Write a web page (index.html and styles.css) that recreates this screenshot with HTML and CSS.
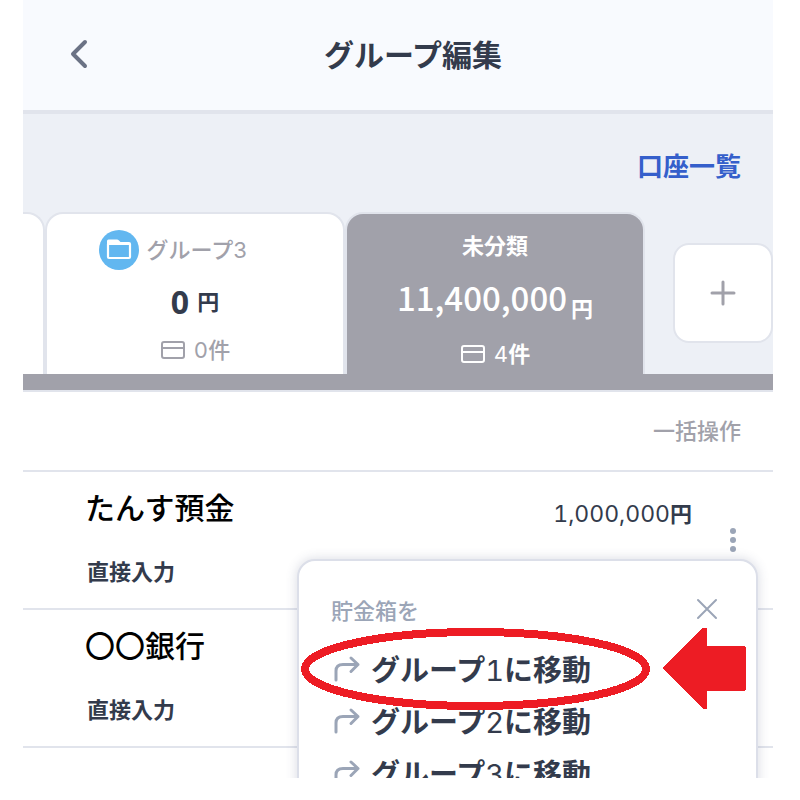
FILE: index.html
```html
<!DOCTYPE html>
<html lang="ja">
<head>
  <meta charset="UTF-8" />
  <title>グループ編集</title>
  <meta name="viewport" content="width=device-width, initial-scale=1" />
  <link rel="stylesheet" href="styles.css">
</head>
<body>

<div class="app">
  <!-- ヘッダー -->
  <header class="header">
    <button type="button" class="back" aria-label="戻る">
      <svg width="20" height="30" viewBox="0 0 20 30"><path d="M16 3 L4 15 L16 27" /></svg>
    </button>
    <h1>グループ編集</h1>
  </header>

  <!-- グループタブ -->
  <section class="groups">
    <a href="#" class="all-link">口座一覧</a>
    <div class="tabs">
      <button type="button" class="tab" aria-label="グループ2"></button>
      <button type="button" class="tab">
        <span class="tab-name with-icon">
          <svg class="folder" width="40" height="40" viewBox="0 0 40 40">
            <circle cx="20" cy="20" r="20" />
            <path d="M8 11 Q8 9.500 9.500 9.500 H18 Q19 9.500 20 10.500 L21.500 12 H30 V15 H8 Z" fill="#fff" />
            <rect x="9" y="13" width="22" height="15" rx="1" fill="none" stroke="#fff" stroke-width="2.200" />
          </svg>
          <span>グループ<span class="num">3</span></span>
        </span>
        <span class="amount"><strong>0</strong><span class="yen">円</span></span>
        <span class="count">
          <svg class="card" width="26" height="20" viewBox="0 0 26 20"><rect x="2" y="2" width="22" height="16" rx="2" /><path d="M2 8 H24" /></svg>
          <span><span class="num">0</span>件</span>
        </span>
      </button>
      <button type="button" class="tab active">
        <span class="tab-name">未分類</span>
        <span class="amount total"><span class="sum">11,400,000</span><span class="yen">円</span></span>
        <span class="count">
          <svg class="card" width="26" height="20" viewBox="0 0 26 20"><rect x="2" y="2" width="22" height="16" rx="2" /><path d="M2 8 H24" /></svg>
          <span><span class="num">4</span>件</span>
        </span>
      </button>
      <button type="button" class="add" aria-label="グループを追加">
        <svg width="26" height="26" viewBox="0 0 26 26"><path d="M13 2 V24 M2 13 H24" /></svg>
      </button>
    </div>
  </section>

  <!-- 口座リスト -->
  <main>
    <div class="toolbar">
      <button type="button" class="bulk">一括操作</button>
    </div>
    <ul class="accounts">
      <li class="account">
        <div class="info">
          <h2>たんす預金</h2>
          <p>直接入力</p>
        </div>
        <span class="balance">1,000,000<span class="yen">円</span></span>
        <button type="button" class="more" aria-label="メニュー">
          <svg width="8" height="26" viewBox="0 0 8 26"><circle cx="4" cy="4" r="3" /><circle cx="4" cy="13" r="3" /><circle cx="4" cy="22" r="3" /></svg>
        </button>

        <!-- 移動メニュー -->
        <div class="menu">
          <div class="menu-head">
            <span>貯金箱を</span>
            <button type="button" class="close" aria-label="閉じる">
              <svg width="22" height="22" viewBox="0 0 22 22"><path d="M2 2 L20 20 M20 2 L2 20" /></svg>
            </button>
          </div>
          <button type="button" class="move">
            <svg width="30" height="28" viewBox="0 0 30 28"><path d="M5 26 V17 Q5 10.500 12 10.500 H27 M20 4 L27 10.500 L20 17.500" /></svg>
            <span>グループ<span class="num">1</span>に移動</span>
          </button>
          <button type="button" class="move">
            <svg width="30" height="28" viewBox="0 0 30 28"><path d="M5 26 V17 Q5 10.500 12 10.500 H27 M20 4 L27 10.500 L20 17.500" /></svg>
            <span>グループ<span class="num">2</span>に移動</span>
          </button>
          <button type="button" class="move">
            <svg width="30" height="28" viewBox="0 0 30 28"><path d="M5 26 V17 Q5 10.500 12 10.500 H27 M20 4 L27 10.500 L20 17.500" /></svg>
            <span>グループ<span class="num">3</span>に移動</span>
          </button>
          <svg class="marker" width="448" height="84" viewBox="0 0 448 84">
            <ellipse cx="175.500" cy="42" rx="170.500" ry="37" />
            <path d="M362 41 L403 1 H407 V19 H444 L446 21 V62 L444 64 H407 V82 H403 Z" />
          </svg>
        </div>
      </li>
      <li class="account">
        <div class="info">
          <h2>〇〇銀行</h2>
          <p>直接入力</p>
        </div>
      </li>
      <li class="account"></li>
    </ul>
  </main>
</div>

</body>
</html>
```

FILE: styles.css
```css
:root {
  --text: #333b4c;
  --gray: #a1a1aa;
  --line: #e1e4ec;
  --muted: #9ba5b7;
  --red: #ed1c24;
}
* {
  box-sizing: border-box;
}
body {
  margin: 0;
  padding: 0 27px 22px 23px;
  background: #fff;
  color: var(--text);
  font-family: Inter, "Noto Sans CJK JP", sans-serif;
  font-variant-numeric: tabular-nums;
}
h1, h2, p, ul {
  margin: 0;
  padding: 0;
}
button {
  margin: 0;
  padding: 0;
  border: none;
  background: none;
  color: inherit;
  font: inherit;
  font-variant-numeric: inherit;
  cursor: pointer;
}
svg {
  display: block;
  flex: none;
  fill: none;
  stroke-linecap: round;
  stroke-linejoin: round;
}
.num {
  font-weight: 400;
}
.app {
  height: calc(100vh - 22px);
  overflow: hidden;
}

/* ヘッダー */
.header {
  display: grid;
  grid-template-columns: 110px 1fr 80px;
  align-items: center;
  height: 114px;
  border-bottom: 4px solid var(--line);
  background: #f8fafe;
}
.header h1 {
  font-size: 30px;
  line-height: 40px;
  text-align: center;
}
.back {
  justify-self: center;
  padding: 0 0 2px 2px;
}
.back svg {
  stroke: #6b7285;
  stroke-width: 4;
}

/* グループタブ */
.groups {
  display: flex;
  flex-direction: column;
  background: #edf0f6;
  border-bottom: 2px solid var(--line);
}
.all-link {
  align-self: flex-end;
  margin: 33px 32px 25px 0;
  color: #355fcb;
  font-size: 26px;
  font-weight: 700;
  line-height: 40px;
  text-decoration: none;
}
.tabs {
  display: flex;
  justify-content: flex-end;
  overflow: hidden;
  border-bottom: 16px solid var(--gray);
}
.tab {
  display: flex;
  flex: none;
  flex-direction: column;
  align-items: center;
  width: 300px;
  height: 162px;
  padding-top: 16px;
  background: #fff;
  border: 2px solid var(--line);
  border-bottom: none;
  border-radius: 18px 18px 0 0;
  color: var(--gray);
  font-size: 22px;
  font-weight: 500;
}
.tab.active {
  padding-top: 12px;
  background: var(--gray);
  color: #fff;
  font-weight: 700;
}
.tab-name, .count {
  display: flex;
  align-items: center;
  gap: 8px;
  height: 36px;
}
.tab-name svg, .count svg {
  margin-top: 4px;
}
.with-icon {
  padding-right: 44px;
}
.folder circle {
  fill: #62b7f0;
}
.card {
  stroke: currentColor;
  stroke-width: 2;
}
.amount {
  display: flex;
  align-items: center;
  gap: 8px;
  height: 40px;
  margin: 16px 0 8px;
  color: var(--text);
}
.amount strong {
  font-family: "Open Sans", sans-serif;
  font-size: 32px;
  font-weight: 700;
  line-height: 40px;
}
.amount .yen {
  padding-bottom: 4px;
  font-weight: 700;
}
.total {
  gap: 4px;
  align-items: flex-end;
  margin: 16px 0;
  color: #fff;
  font-family: "Noto Sans CJK JP", sans-serif;
}
.total .sum {
  font-size: 33px;
  font-weight: 500;
  line-height: 38px;
  padding-bottom: 2px;
}
.total .yen {
  padding: 0;
  line-height: 22px;
}
.add {
  display: grid;
  flex: none;
  place-items: center;
  width: 100px;
  height: 100px;
  margin: 31px 0 0 28px;
  background: #fff;
  border: 2px solid var(--line);
  border-radius: 16px;
}
.add svg {
  stroke: var(--gray);
  stroke-width: 3;
}

/* 口座リスト */
.toolbar {
  display: flex;
  align-items: center;
  justify-content: flex-end;
  height: 80px;
  padding: 0 32px 4px 0;
  border-bottom: 2px solid var(--line);
}
.bulk {
  color: var(--gray);
  font-size: 22px;
  font-weight: 500;
}
.accounts {
  list-style: none;
}
.account {
  display: flex;
  position: relative;
  align-items: flex-start;
  height: 138px;
  padding: 16px 36px 0 62px;
  border-bottom: 2px solid var(--line);
}
.info {
  flex: 1;
}
.info h2 {
  color: #000;
  font-size: 30px;
  font-weight: 500;
  line-height: 40px;
}
.info p {
  margin-top: 24px;
  padding-left: 2px;
  font-size: 22px;
  font-weight: 700;
  line-height: 40px;
}
.balance {
  margin-top: 6px;
  font-size: 23px;
  line-height: 40px;
}
.balance .yen {
  font-size: 22px;
  font-weight: 700;
}
.more {
  margin: 39px 0 0 37px;
}
.more svg {
  fill: var(--muted);
}

/* 移動メニュー */
.menu {
  position: absolute;
  z-index: 1;
  top: 87px;
  left: 274px;
  right: 15px;
  padding: 28px 32px 40px;
  background: #fff;
  border: 2px solid #dcdfe9;
  border-radius: 18px;
  box-shadow: 0 0 12px rgba(60, 70, 110, 0.2);
}
.menu-head {
  display: flex;
  align-items: center;
  justify-content: space-between;
  height: 40px;
  margin-bottom: 13px;
  padding-right: 6px;
  color: var(--muted);
  font-size: 22px;
  font-weight: 500;
}
.close svg {
  stroke: var(--muted);
  stroke-width: 2;
}
.move {
  display: flex;
  align-items: center;
  gap: 10px;
  height: 52px;
  font-size: 29px;
  font-weight: 700;
  white-space: nowrap;
}
.move svg {
  stroke: var(--muted);
  stroke-width: 3;
}
.marker {
  position: absolute;
  top: 66px;
  left: 1px;
  pointer-events: none;
  shape-rendering: crispEdges;
}
.marker ellipse {
  stroke: var(--red);
  stroke-width: 8;
}
.marker path {
  fill: var(--red);
}
```
